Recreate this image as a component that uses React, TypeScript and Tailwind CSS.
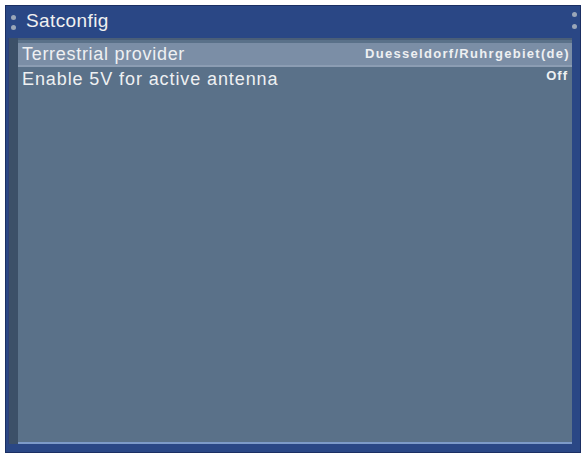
export default function App() {
  const font = { fontFamily: '"Liberation Sans", Arial, sans-serif' };
  return (
    <div className="w-[584px] h-[459px] bg-white p-[5px] pr-[3px] pb-[6px]" style={font}>
      <div className="w-full h-full bg-[#2a4785] border border-[#1b2f63] flex flex-col relative">
        <div className="absolute left-[5px] top-[9px] w-[5px] h-[5px] rounded-full bg-[#9aa6b8]" />
        <div className="absolute left-[5px] top-[19px] w-[5px] h-[5px] rounded-full bg-[#9aa6b8]" />
        <div className="absolute right-[3px] top-[6px] w-[5px] h-[5px] rounded-full bg-[#9aa6b8]" />
        <div className="absolute right-[3px] top-[18px] w-[5px] h-[5px] rounded-full bg-[#9aa6b8]" />
        <div className="h-[32px] shrink-0 pl-[20px] pt-[4px] text-[19px] tracking-[0.4px] text-[#f0f0f0] leading-[22px]">
          Satconfig
        </div>
        <div className="flex-1 ml-[2px] mr-[8px] mb-[8px] flex">
          <div className="w-[10px] bg-[#3c5068] border-l border-[#2f3f78]" />
          <div className="flex-1 bg-[#5a7189] border-t-[2px] border-[#4a5e78] border-b-[2px] border-b-[#7d9ac8] pt-[3px]">
            <div className="h-[24px] bg-[#7b8ea6] border-b-[2px] border-[#8c9db3] flex items-center justify-between pl-[4px] pr-[2px]">
              <span className="text-[18px] tracking-[0.7px] text-[#eef0f2]">Terrestrial provider</span>
              <span className="text-[13px] font-bold tracking-[1.3px] text-[#eef0f2]">Duesseldorf/Ruhrgebiet(de)</span>
            </div>
            <div className="h-[24px] flex items-start justify-between pl-[4px] pr-[4px]">
              <span className="text-[18px] tracking-[0.9px] text-[#eef0f2] leading-[24px]">Enable 5V for active antenna</span>
              <span className="text-[13px] font-bold tracking-[1px] text-[#eef0f2] pt-[1px] leading-[16px]">Off</span>
            </div>
          </div>
        </div>
      </div>
    </div>
  );
}
